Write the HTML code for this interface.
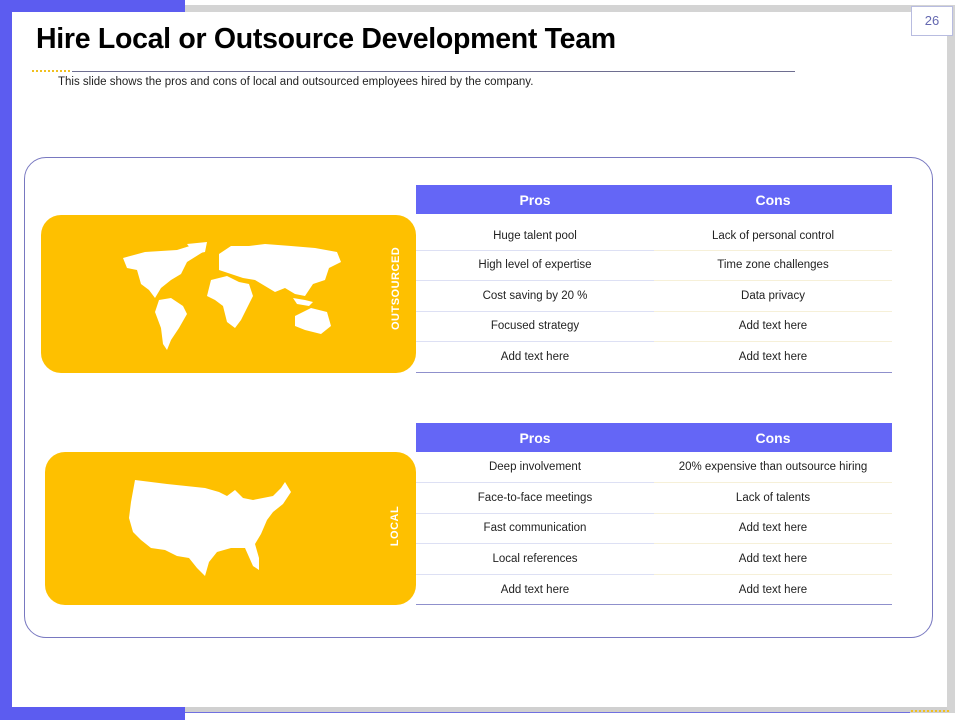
<!DOCTYPE html>
<html><head><meta charset="utf-8"><style>
*{margin:0;padding:0;box-sizing:border-box}
body{width:960px;height:720px;position:relative;overflow:hidden;background:#fff;font-family:"Liberation Sans",sans-serif}
.abs{position:absolute}
table{position:absolute;border-collapse:collapse;width:476px;font-size:11.5px;color:#222;text-align:center}
th{background:#6466f6;color:#fff;font-size:14px;height:29px;font-weight:bold}
td{height:30.6px}
tr.r td:first-child{border-bottom:1px solid #dde0f4}
tr.r td:last-child{border-bottom:1px solid #f6f0d8}
tr.last td{border-bottom:1.5px solid #8f90cc!important}
.card{position:absolute;background:#fec000;border-radius:20px}
.vl{position:absolute;color:#fff;font-weight:bold;font-size:11px;transform:rotate(-90deg);transform-origin:center;letter-spacing:.5px}
</style></head><body>
<div class="abs" style="left:0;top:0;width:185px;height:12px;background:#5c5cf0"></div>
<div class="abs" style="left:0;top:0;width:12px;height:720px;background:#5c5cf0"></div>
<div class="abs" style="left:0;top:707px;width:185px;height:13px;background:#5c5cf0"></div>
<div class="abs" style="left:185px;top:5px;width:770px;height:7px;background:#d4d4d4"></div>
<div class="abs" style="left:947px;top:5px;width:8px;height:708px;background:#d4d4d4"></div>
<div class="abs" style="left:185px;top:707px;width:762px;height:6px;background:#d0d0d0"></div>
<div class="abs" style="left:185px;top:712px;width:725px;height:1px;background:#7070e0"></div>
<div class="abs" style="left:911px;top:710px;width:38px;height:2px;border-top:2px dotted #f0c020"></div>
<div class="abs" style="left:911px;top:6px;width:42px;height:30px;border:1px solid #b8bce0;background:#fff;color:#6468b0;font-size:13px;text-align:center;line-height:28px">26</div>
<div class="abs" style="left:36px;top:23px;font-size:28.5px;font-weight:bold;color:#000;letter-spacing:-0.3px">Hire Local or Outsource Development Team</div>
<div class="abs" style="left:32px;top:70px;width:38px;border-top:2px dotted #f0c020"></div>
<div class="abs" style="left:72px;top:71px;width:723px;height:1px;background:#6e6e90"></div>
<div class="abs" style="left:58px;top:76px;font-size:11.5px;color:#222">This slide shows the pros and cons of local and outsourced employees hired by the company.</div>
<div class="abs" style="left:24px;top:157px;width:909px;height:481px;border:1px solid #7878c0;border-radius:22px"></div>

<div class="card" style="left:41px;top:215px;width:375px;height:158px"></div>
<svg class="abs" style="left:115px;top:240px" width="235" height="112" viewBox="0 0 235 112"><g fill="#fff">
<path d="M8 18 L30 12 L62 10 L78 5 L88 12 L72 22 L66 34 L56 40 L46 48 L40 58 L34 50 L26 44 L22 30 L12 28Z"/>
<path d="M72 4 L92 2 L90 12 L80 14Z"/>
<path d="M44 60 L56 58 L68 66 L72 74 L64 88 L56 100 L52 110 L48 104 L46 88 L40 72Z"/>
<path d="M104 14 L116 6 L134 6 L150 4 L176 6 L200 8 L222 12 L226 22 L214 28 L210 40 L198 44 L190 56 L180 54 L170 48 L160 52 L150 46 L140 40 L128 38 L116 34 L104 30Z"/>
<path d="M96 40 L112 36 L124 42 L134 44 L138 56 L132 68 L126 80 L120 88 L112 82 L108 66 L100 60 L92 56Z"/>
<path d="M178 58 L190 60 L198 62 L194 66 L182 64Z"/>
<path d="M180 76 L196 68 L212 72 L216 86 L206 94 L190 90 L180 86Z"/>
</g></svg>
<div class="vl" style="left:362px;top:290px;width:68px;text-align:center">OUTSOURCED</div>

<div class="card" style="left:45px;top:452px;width:371px;height:153px"></div>
<svg class="abs" style="left:127px;top:478px" width="165" height="104" viewBox="0 0 165 104"><g fill="#fff">
<path d="M8 2 L40 6 L78 10 L92 14 L100 18 L108 12 L116 20 L126 22 L146 18 L154 10 L158 4 L164 14 L156 26 L146 34 L140 42 L134 56 L128 66 L132 80 L132 92 L126 88 L118 70 L104 70 L90 74 L82 84 L78 98 L70 90 L62 80 L50 78 L38 72 L24 70 L14 62 L6 54 L2 40 L4 24Z"/>
</g></svg>
<div class="vl" style="left:365px;top:520px;width:60px;text-align:center">LOCAL</div>

<table style="left:416px;top:185px">
<tr><th style="width:238px">Pros</th><th>Cons</th></tr>
<tr class="r"><td style="padding-top:8px;height:36px">Huge talent pool</td><td style="padding-top:8px">Lack of personal control</td></tr>
<tr class="r"><td>High level of expertise</td><td>Time zone challenges</td></tr>
<tr class="r"><td>Cost saving by 20 %</td><td>Data privacy</td></tr>
<tr class="r"><td>Focused strategy</td><td>Add text here</td></tr>
<tr class="r last"><td>Add text here</td><td>Add text here</td></tr>
</table>
<table style="left:416px;top:423px">
<tr><th style="width:238px">Pros</th><th>Cons</th></tr>
<tr class="r"><td>Deep involvement</td><td>20% expensive than outsource hiring</td></tr>
<tr class="r"><td>Face-to-face meetings</td><td>Lack of talents</td></tr>
<tr class="r"><td>Fast communication</td><td>Add text here</td></tr>
<tr class="r"><td>Local references</td><td>Add text here</td></tr>
<tr class="r last"><td>Add text here</td><td>Add text here</td></tr>
</table>
</body></html>
